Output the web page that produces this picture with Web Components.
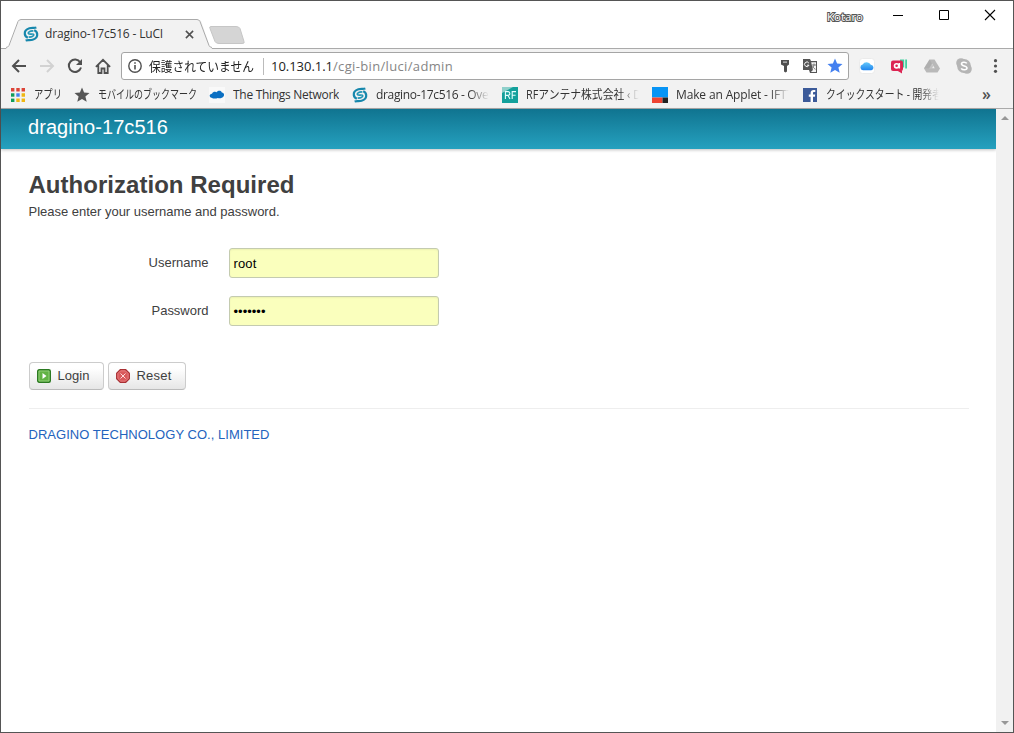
<!DOCTYPE html>
<html lang="ja">
<head>
<meta charset="utf-8">
<title>dragino-17c516 - LuCI</title>
<style>
    html, body { margin: 0; height: 100%; overflow: hidden; background: #fff; }
</style>
</head>
<body>
<browser-window></browser-window>

<script>
    var uiFont = '"Open Sans", "Noto Sans CJK JP", sans-serif';
    var pageFont = '"Liberation Sans", Arial, sans-serif';

    // icons, each as the inside of an svg
    var icons = {
        dragino: ['0 0 16 16', '<g fill="none" stroke="#1687ac" stroke-width="2.2" transform="rotate(-14 8 8)"><path d="M14.800 3C12.500 3.200 10.500 1.800 7.800 2 4.500 2.200 2.300 4 2 6.500c-.3 2.300.8 3.500 2 4.300"/><path d="M1.200 13c2.300-.2 4.300 1.200 7 1 3.300-.2 5.500-2 5.800-4.500.3-2.300-.8-3.500-2-4.300"/><path d="M11 5.700C8.500 4.600 5.600 5.200 5.500 6.800c-.1 1.700 5.100.8 5 2.500-.1 1.600-3 2-5.500 1" stroke-width="1.700" stroke="#2496b6"/></g>'],
        back: ['0 0 16 16', '<path d="M15 8H2M8 2L2 8l6 6" fill="none" stroke="#505050" stroke-width="2"/>'],
        forward: ['0 0 16 16', '<path d="M1 8h13M8 2l6 6-6 6" fill="none" stroke="#d2d2d2" stroke-width="2"/>'],
        reload: ['0 0 16 16', '<path d="M13.2 4.2A6.2 6.2 0 1 0 14 9.5" fill="none" stroke="#505050" stroke-width="2"/><path d="M15 1v6H9z" fill="#505050"/>'],
        home: ['0 0 16 16', '<path d="M.9 8.8L8 1.8l7.1 7M3.3 7.3V15h3.2v-4.5h3V15h3.2V7.3" fill="none" stroke="#505050" stroke-width="1.8"/>'],
        info: ['0 0 16 16', '<circle cx="8" cy="8" r="6.2" fill="none" stroke="#505050" stroke-width="1.4"/><path d="M7.2 7h1.6v4.6H7.2zM7.2 4.2h1.6v1.6H7.2z" fill="#505050"/>'],
        key: ['0 0 16 16', '<path d="M4 2h8v4.5L10 8v5.500L8.500 14.500 7 13.500V8L4 6.500z" fill="#505050"/><path d="M6 3.600h4v1H6z" fill="#ddd"/>'],
        translate: ['0 0 16 16', '<path d="M1 1h7l1 2h6v12H8l-1-3H1z" fill="#555"/><path d="M9.2 4.2H14V14H8.9l2-2z" fill="#f4f4f4"/><path d="M6.8 5A2.3 2.3 0 1 0 7 7.2H5" fill="none" stroke="#fff"/><path d="M9.8 7H14M12 5.5V7c-.4 2-1.4 3.2-2.4 4M10.5 8.3c1 1.7 2 2.4 3 3" fill="none" stroke="#777"/>'],
        star: ['0 0 16 16', '<path d="M8 .6l2.1 5 5.4.4-4.1 3.5 1.3 5.3L8 12l-4.7 2.8 1.3-5.3L.5 6l5.4-.4z" fill="currentColor"/>'],
        icloud: ['0 0 16 16', '<defs><linearGradient id="sky" x2="0" y2="1"><stop stop-color="#64c8fa"/><stop offset="1" stop-color="#1f84ee"/></linearGradient></defs><rect x=".5" y=".5" width="15" height="15" rx="3" fill="#fff" stroke="#ebebeb"/><path d="M4 12.300a2.900 2.900 0 0 1-.4-5.700 4.600 4.600 0 0 1 8.200.2 2.800 2.800 0 0 1 .6 5.500z" fill="url(#sky)"/>'],
        chat: ['0 0 16 16', '<path d="M9 1.500h4.200v8H9zM14.200 1.500H16v9h-1.800z" fill="#42cfa0"/><rect x="0" y="2.500" width="12" height="10.500" rx="2" fill="#dc2452"/><path d="M6 12.500h5v3z" fill="#dc2452"/><circle cx="5.600" cy="7.800" r="2.100" fill="none" stroke="#fff" stroke-width="1.600"/><path d="M8.300 5v5.500" stroke="#fff" stroke-width="1.600"/>'],
        drive: ['0 0 16 16', '<path d="M5.5 1.500h5L16 10.400l-2.500 4h-11L0 10.400z" fill="#b9b9b9"/><path d="M8 5.500l2.700 4.800H5.300z" fill="#eee"/><path d="M5.500 1.500L9.300 8 8 10.300H0z" fill="#a9a9a9" opacity=".6"/>'],
        skype: ['0 0 16 16', '<circle cx="5" cy="5" r="4.8" fill="#b5b5b5"/><circle cx="11" cy="11" r="4.8" fill="#b5b5b5"/><circle cx="8" cy="8" r="6.9" fill="#b5b5b5"/><path d="M10.8 5.400C9.700 3.700 5.500 3.800 5.500 6c0 2.500 5.500 1.400 5.500 4 0 2.300-4.600 2.300-5.800.3" fill="none" stroke="#fff" stroke-width="1.600"/>'],
        menu: ['0 0 16 16', '<g fill="#505050"><circle cx="7.500" cy="2.700" r="1.600"/><circle cx="7.500" cy="8" r="1.600"/><circle cx="7.500" cy="13.300" r="1.600"/></g>'],
        apps: ['0 0 16 16', '<path d="M1 1h3.400v3.400H1zM6.300 1h3.400v3.400H6.300zM11.600 1H15v3.400h-3.400z" fill="#dc4438"/><path d="M1 6.300h3.400v3.400H1z" fill="#109d59"/><path d="M6.300 6.300h3.400v3.400H6.300z" fill="#4182ed"/><path d="M11.600 6.300H15v3.400h-3.400zM6.300 11.600h3.400V15H6.300zM11.600 11.600H15V15h-3.400z" fill="#efb713"/><path d="M1 11.600h3.400V15H1z" fill="#109d59"/>'],
        ttn: ['0 0 16 16', '<rect width="16" height="16" fill="#f9f9f9"/><path d="M2.500 10.700c-2.600-.6-2.400-3.700.5-4C4 4 7 4.500 7.400 5.300 8.600 2.900 12.500 3.200 12.800 5.500c3 .1 3 4.300 0 5.200-1.300.8-2.700.9-4 .2-2 1-4.600.8-6.300-.2z" fill="#0b6fc2"/>'],
        rf: ['0 0 16 16', '<rect width="16" height="16" fill="#13a09b"/><path d="M0 0h11L0 6z" fill="#8fd0cb"/><path d="M3.400 12V4.600h2.500c2.600 0 2.600 3.800 0 3.800H3.400m2.600 0l2 3.600M10.200 12V4.600H14M10.200 8.200h3.400" fill="none" stroke="#e6ffff" stroke-width="1.100"/>'],
        ifttt: ['0 0 16 16', '<path d="M0 0h16v10.500H0z" fill="#0794f5"/><path d="M0 10.500h10.500V16H0z" fill="#ee4433"/><path d="M10.500 10.500H16V16h-5.500z" fill="#222"/>'],
        facebook: ['0 0 16 16', '<rect x="1" y="1" width="14" height="14" fill="#3c5a99"/><path d="M8.600 15V9.800H6.800V7.600h1.800V6c0-2.100 1.200-3 3-3h1.700v2.100h-1.200c-.9 0-1.100.4-1.100 1.100v1.400h2.200l-.3 2.200H11V15z" fill="#fff"/>'],
        close: ['0 0 10 10', '<path d="M1 1l8 8M9 1L1 9" stroke="#505050" stroke-width="1.700"/>'],
        min: ['0 0 12 12', '<path d="M1 6.500h10" stroke="#000"/>'],
        max: ['0 0 12 12', '<path d="M1.500 1.500h9v9h-9z" fill="none" stroke="#000"/>'],
        quit: ['0 0 12 12', '<path d="M1 1l10 10M11 1L1 11" stroke="#000" stroke-width="1.100"/>'],
        up: ['0 0 8 4', '<path d="M0 4l4-4 4 4z" fill="#979797"/>'],
        down: ['0 0 8 4', '<path d="M0 0l4 4 4-4z" fill="#979797"/>'],
        login: ['0 0 14 14', '<rect x=".7" y=".7" width="12.600" height="12.600" rx="1.500" fill="#62b344" stroke="#2c7a22" stroke-width="1.400"/><path d="M2 2h10v10H2z" fill="none" stroke="#9ed585" stroke-width=".8"/><path d="M5.500 4l4 3-4 3z" fill="#fff"/>'],
        reset: ['0 0 14 14', '<path d="M4.300.7h5.400l3.600 3.600v5.400l-3.600 3.600H4.300L.7 9.700V4.300z" fill="#d9595b" stroke="#a93034" stroke-width="1.300"/><path d="M4.500 1.900h5l2.600 2.600v5l-2.600 2.600h-5L1.900 9.500v-5z" fill="none" stroke="#ee9292" stroke-width=".7"/><path d="M4.500 4.500l5 5M9.500 4.500l-5 5" stroke="#fbdcdc" stroke-width="1"/>']
    };

    function define(name, render) {
        customElements.define(name, class extends HTMLElement {
            constructor() {
                super();
                this.attachShadow({mode: 'open'});
            }
            connectedCallback() {
                this.shadowRoot.innerHTML = render(this);
            }
        });
    }

    define('ui-icon', function (el) {
        var icon = icons[el.getAttribute('name')];
        var w = el.getAttribute('w') || 16;
        var h = el.getAttribute('h') || w;
        return `<style>:host { display: block; flex: none; width: ${w}px; height: ${h}px; } svg { display: block; }</style>
            <svg width="${w}" height="${h}" viewBox="${icon[0]}">${icon[1]}</svg>`;
    });

    // one line of text set to a given width, by spacing or by squeezing the letters
    class FitText extends HTMLElement {
        constructor() {
            super();
            this.attachShadow({mode: 'open'}).innerHTML = `
                <style>
                    :host { display: block; flex: none; white-space: nowrap; }
                    span { display: inline-block; transform-origin: 0 50%; }
                </style>
                <span><slot></slot></span>`;
        }
        connectedCallback() {
            var span = this.shadowRoot.querySelector('span');
            var width = parseFloat(this.getAttribute('w'));
            this.style.width = width + 'px';
            var natural = span.getBoundingClientRect().width;
            if (this.hasAttribute('squeeze')) {
                span.style.transform = 'scaleX(' + width / natural + ')';
            } else {
                span.style.letterSpacing = (width - natural) / this.textContent.length + 'px';
            }
        }
    }
    customElements.define('fit-text', FitText);

    define('tab-strip', function () {
        return `<style>
            :host { display: flex; height: 47px; background: #fff; }
            .tab { display: grid; margin-top: 18px; width: 206px; height: 29px; margin-left: 5px; }
            .tab > * { grid-area: 1 / 1; }
            .face { display: flex; align-items: center; padding: 0 0 0 17px; font: 12px ${uiFont}; color: #333; }
            .face fit-text { margin: -1px 22px 0 6px; }
            .new { margin: 25px 0 0 -3px; }
            .line { position: relative; z-index: 1; }
            .user { margin: 8px 29px 0 auto; font: 11.5px ${uiFont}; line-height: 16px; color: #fff; -webkit-text-stroke: 2px #555; paint-order: stroke fill; }
            .buttons { display: flex; gap: 34px; margin: 8px 17px 0 0; }
        </style>
        <div class="tab">
            <svg class="line" width="206" height="30"><path d="M0 29.5L3 28 13 1.5 16 .5H192l3 1L204 28l2 1.5V30H0z" fill="#f2f2f2"/><path d="M0 28.5q2 0 3-2L12 2.5q1-2 3-2H191q2 0 3 2L203 26.5q1 2 3 2" fill="none" stroke="#aaa"/></svg>
            <div class="face line"><ui-icon name="dragino" w="16"></ui-icon><fit-text w="118">dragino-17c516 - LuCI</fit-text><ui-icon name="close" w="9"></ui-icon></div>
        </div>
        <svg class="new" width="36" height="19"><path d="M2 .5H27q3 0 4 2l4 13q1 2-2 2H10q-3 0-4-2L1 2.5Q0 .5 2 .5z" fill="#d5d5d5" stroke="#c6c6c6"/></svg>
        <div class="user"><fit-text w="36">Kotaro</fit-text></div>
        <div class="buttons"><ui-icon name="min" w="12"></ui-icon><ui-icon name="max" w="12"></ui-icon><ui-icon name="quit" w="12"></ui-icon></div>`;
    });

    define('address-bar', function () {
        return `<style>
            :host { display: flex; align-items: center; box-sizing: border-box; height: 35px; padding: 0 9px 0 10px; background: #f2f2f2; border-top: 1px solid #aaa; font: 13px/20px ${uiFont}; color: #222; }
            .nav { display: flex; gap: 12px; width: 110px; }
            .box { display: flex; align-items: center; box-sizing: border-box; width: 728px; height: 28px; padding: 0 5px; background: #fff; border: 1px solid #a5a5a5; border-radius: 3px; }
            .secure { margin-left: 6px; }
            .bar { width: 1px; height: 17px; margin: 0 7px 0 9px; background: #bbb; }
            .path { color: #858585; }
            .actions { display: flex; gap: 9px; margin-left: auto; color: #4480f0; }
            .ext { display: flex; flex: 1; justify-content: space-between; margin-left: 10px; }
        </style>
        <div class="nav"><ui-icon name="back"></ui-icon><ui-icon name="forward"></ui-icon><ui-icon name="reload"></ui-icon><ui-icon name="home"></ui-icon></div>
        <div class="box">
            <ui-icon name="info"></ui-icon>
            <fit-text class="secure" w="105" squeeze>保護されていません</fit-text>
            <div class="bar"></div>
            <fit-text w="62">10.130.1.1</fit-text><fit-text class="path" w="120">/cgi-bin/luci/admin</fit-text>
            <div class="actions"><ui-icon name="key"></ui-icon><ui-icon name="translate"></ui-icon><ui-icon name="star"></ui-icon></div>
        </div>
        <div class="ext"><ui-icon name="icloud"></ui-icon><ui-icon name="chat"></ui-icon><ui-icon name="drive"></ui-icon><ui-icon name="skype"></ui-icon><ui-icon name="menu"></ui-icon></div>`;
    });

    define('bookmark-item', function (el) {
        return `<style>
            :host { display: flex; flex: none; align-items: center; gap: 8px; box-sizing: border-box; width: ${el.getAttribute('cell')}px; color: #555; }
            ui-icon { margin-top: -1px; }
            .label { color: #333; overflow: hidden; }
            :host([fade]) .label { width: 114px; -webkit-mask-image: linear-gradient(90deg, #000 82%, transparent 99%); }
        </style>
        <ui-icon name="${el.getAttribute('icon')}"></ui-icon>
        <div class="label"><slot></slot></div>`;
    });

    define('bookmark-bar', function () {
        return `<style>
            :host { display: flex; align-items: center; box-sizing: border-box; height: 26px; padding: 0 22px 1px 9px; background: #f2f2f2; border-bottom: 1px solid #aaa; font: 12px/20px ${uiFont}; }
            .more { margin: -3px 0 0 auto; font-size: 16px; font-weight: 600; color: #505050; }
        </style>
        <bookmark-item cell="64" icon="apps"><fit-text w="28" squeeze>アプリ</fit-text></bookmark-item>
        <bookmark-item cell="135" icon="star"><fit-text w="99" squeeze>モバイルのブックマーク</fit-text></bookmark-item>
        <bookmark-item cell="143" icon="ttn"><fit-text w="106">The Things Network</fit-text></bookmark-item>
        <bookmark-item cell="150" icon="dragino" fade><fit-text w="117">dragino-17c516 - Over</fit-text></bookmark-item>
        <bookmark-item cell="150" icon="rf" fade><fit-text w="115" squeeze>RFアンテナ株式会社 ‹ D</fit-text></bookmark-item>
        <bookmark-item cell="150" icon="ifttt" fade><fit-text w="117">Make an Applet - IFTT</fit-text></bookmark-item>
        <bookmark-item cell="146" icon="facebook" fade><fit-text w="116" squeeze>クイックスタート - 開発者</fit-text></bookmark-item>
        <div class="more">»</div>`;
    });

    define('form-row', function (el) {
        return `<style>
            :host { display: flex; align-items: center; height: 30px; margin-bottom: 18px; }
            .label { display: flex; justify-content: flex-end; width: 180px; margin: 0 20px 0 0; }
            .input { box-sizing: border-box; width: 210px; height: 30px; padding: 1px 4px 0; line-height: 27px; background: #faffbd; border: 1px solid #c4cbb0; border-radius: 3px; box-shadow: inset 0 1px 2px rgba(0, 0, 0, .06); color: #000; }
        </style>
        <div class="label"><fit-text w="${el.getAttribute('w')}">${el.getAttribute('label')}</fit-text></div>
        <div class="input"><slot></slot></div>`;
    });

    define('page-button', function (el) {
        return `<style>
            :host { display: flex; align-items: center; box-sizing: border-box; width: ${el.getAttribute('w')}px; height: 28px; padding: 0 0 1px 7px; gap: 7px; border: 1px solid #ccc; border-bottom-color: #bbb; border-radius: 4px; background: linear-gradient(#fff 20%, #e6e6e6); }
        </style>
        <ui-icon name="${el.getAttribute('icon')}" w="14"></ui-icon>
        <slot></slot>`;
    });

    define('login-page', function () {
        return `<style>
            :host { display: block; flex: 1; background: #fff; font: 13px/18px ${pageFont}; color: #404040; }
            header { height: 40px; padding-left: 27px; background: linear-gradient(#107490, #25a1bf); box-shadow: 0 1px 3px rgba(0, 0, 0, .25); color: #fff; font-size: 20px; line-height: 36px; }
            main { padding: 18px 27px 0 27.5px; }
            h2 { margin: 0; font-size: 24px; line-height: 36px; }
            form { margin: 27px 0 0; }
            .actions { display: flex; gap: 4px; padding-top: 18px; }
            footer { margin-top: 18px; padding-top: 17px; border-top: 1px solid #eee; color: #2463bd; }
        </style>
        <header><fit-text w="140">dragino-17c516</fit-text></header>
        <main>
            <h2><fit-text w="266">Authorization Required</fit-text></h2>
            <fit-text w="251">Please enter your username and password.</fit-text>
            <form>
                <form-row label="Username" w="60"><fit-text w="23">root</fit-text></form-row>
                <form-row label="Password" w="57"><fit-text w="32">•••••••</fit-text></form-row>
                <div class="actions">
                    <page-button icon="login" w="75"><fit-text w="32">Login</fit-text></page-button>
                    <page-button icon="reset" w="78"><fit-text w="35">Reset</fit-text></page-button>
                </div>
            </form>
            <footer><fit-text w="241">DRAGINO TECHNOLOGY CO., LIMITED</fit-text></footer>
        </main>`;
    });

    define('scroll-bar', function () {
        return `<style>
            :host { display: flex; flex-direction: column; justify-content: space-between; align-items: center; box-sizing: border-box; width: 17px; padding: 7px 0; background: #f1f1f1; }
        </style>
        <ui-icon name="up" w="8" h="4"></ui-icon><ui-icon name="down" w="8" h="4"></ui-icon>`;
    });

    define('browser-window', function () {
        return `<style>
            :host { display: flex; flex-direction: column; box-sizing: border-box; width: 1014px; height: 733px; border: 1px solid #555; }
            .view { display: flex; flex: 1; }
        </style>
        <tab-strip></tab-strip>
        <address-bar></address-bar>
        <bookmark-bar></bookmark-bar>
        <div class="view"><login-page></login-page><scroll-bar></scroll-bar></div>`;
    });
</script>
</body>
</html>
